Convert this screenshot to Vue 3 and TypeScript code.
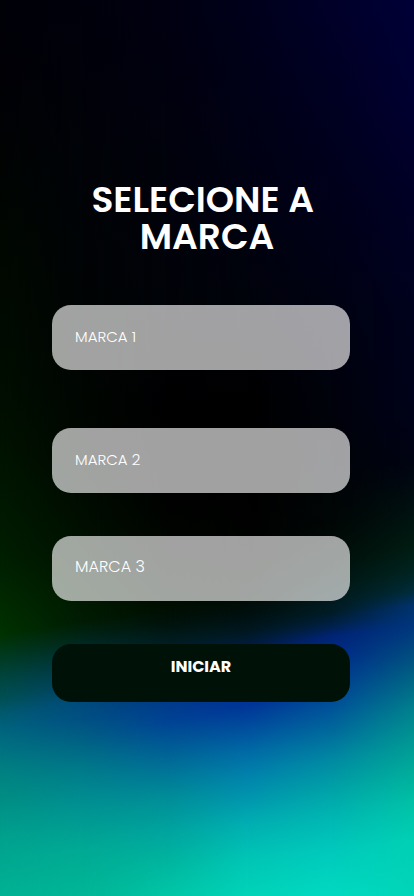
<script setup lang="ts">
import { reactive } from 'vue'

interface BrandField {
  id: string
  label: string
  size: 'small' | 'large'
  value: string
}

const brands = reactive<BrandField[]>([
  { id: 'marca-1', label: 'MARCA 1', size: 'small', value: '' },
  { id: 'marca-2', label: 'MARCA 2', size: 'small', value: '' },
  { id: 'marca-3', label: 'MARCA 3', size: 'large', value: '' },
])

// Each ramp is a vertical list of [height, green, blue] stops;
// the ramps are spread evenly from the left edge to the right one.
type Stop = [number, number, number]

const RAMP_HEIGHT = 896
const BLEED = 40
const SLANT = 60

const ramps: Stop[][] = [
  [
    [0, 0, 9], [140, 3, 4], [300, 10, 0], [400, 14, 0], [500, 24, 0], [560, 31, 0],
    [610, 44, 0], [636, 50, 2], [660, 60, 36], [680, 70, 64], [700, 80, 84], [715, 90, 110],
    [728, 98, 124], [745, 110, 128], [770, 128, 130], [800, 142, 132], [840, 162, 142],
    [896, 178, 148],
  ],
  [
    [0, 0, 12], [150, 3, 8], [300, 4, 4], [450, 7, 0], [550, 17, 0], [600, 25, 0],
    [622, 28, 3], [640, 38, 28], [660, 50, 60], [680, 62, 92], [702, 74, 124], [720, 80, 131],
    [740, 96, 132], [770, 122, 138], [800, 142, 145], [850, 170, 148], [896, 182, 150],
  ],
  [
    [0, 0, 18], [150, 2, 12], [300, 3, 8], [400, 0, 2], [500, 2, 0], [560, 7, 0],
    [605, 14, 0], [622, 18, 10], [640, 28, 30], [660, 36, 64], [680, 48, 104], [705, 60, 140],
    [722, 67, 148], [740, 85, 148], [770, 115, 151], [800, 143, 152], [830, 163, 158],
    [860, 180, 158], [896, 198, 166],
  ],
  [
    [0, 0, 28], [150, 1, 20], [300, 3, 11], [400, 0, 1], [480, 0, 0], [550, 3, 0],
    [595, 11, 4], [615, 16, 16], [632, 24, 34], [645, 28, 64], [665, 36, 118], [690, 45, 146],
    [706, 54, 152], [728, 78, 158], [750, 105, 165], [775, 130, 172], [800, 152, 175],
    [825, 176, 178], [860, 198, 182], [896, 212, 184],
  ],
  [
    [0, 0, 42], [150, 0, 30], [300, 2, 18], [430, 2, 10], [520, 6, 5], [560, 15, 10],
    [590, 24, 22], [612, 28, 38], [624, 32, 70], [636, 36, 118], [655, 42, 134],
    [675, 56, 144], [702, 78, 152], [730, 105, 156], [760, 138, 163], [790, 163, 168],
    [820, 184, 180], [850, 201, 188], [896, 218, 193],
  ],
  [
    [0, 0, 56], [100, 0, 49], [200, 0, 38], [300, 2, 30], [400, 2, 26], [460, 3, 18],
    [500, 15, 16], [545, 28, 18], [570, 36, 32], [590, 44, 58], [604, 50, 108],
    [625, 54, 124], [650, 74, 126], [680, 102, 132], [710, 130, 142], [735, 148, 146],
    [770, 172, 154], [800, 192, 166], [840, 208, 180], [896, 212, 184],
  ],
]

const last = ramps.length - 1

const bands = ramps.map((ramp, index) => {
  const shift = BLEED + SLANT * (index / last - 0.5)
  const stops = ramp.map(([y, green, blue]) => {
    const at = ((y + shift) / (RAMP_HEIGHT + 2 * BLEED)) * 100
    return `rgb(0, ${green}, ${blue}) ${at.toFixed(2)}%`
  })
  const from = ((index - 1) / last) * 100
  const to = (index / last) * 100
  return {
    backgroundImage: `linear-gradient(${stops.join(', ')})`,
    maskImage: index === 0 ? 'none' : `linear-gradient(90deg, transparent ${from}%, #000 ${to}%)`,
  }
})
</script>

<template>
  <main class="screen">
    <div class="aurora" aria-hidden="true">
      <div v-for="(band, index) in bands" :key="index" class="band" :style="band"></div>
    </div>

    <h1 class="title">SELECIONE A&nbsp;<br />MARCA</h1>

    <form class="form" @submit.prevent>
      <input
        v-for="brand in brands"
        :id="brand.id"
        :key="brand.id"
        v-model="brand.value"
        class="field"
        :class="brand.size"
        type="text"
        :placeholder="brand.label"
        :aria-label="brand.label"
      />
      <button class="start" type="submit">INICIAR</button>
    </form>
  </main>
</template>

<style>
body {
  margin: 0;
  background: #000;
}
</style>

<style scoped>
.screen {
  position: relative;
  isolation: isolate;
  box-sizing: border-box;
  min-height: 100vh;
  padding: 181px 0 40px;
  overflow: hidden;
  color: #fff;
  font-family: Poppins, Lato, sans-serif;
}

.aurora {
  position: absolute;
  inset: -40px 0;
  z-index: -1;
  transform: skewY(-8deg);
}

.band {
  position: absolute;
  inset: 0;
}

.title {
  margin: 0 0 50px;
  font-size: 36px;
  font-weight: 600;
  line-height: 37px;
  text-align: center;
}

.form {
  display: flex;
  flex-direction: column;
  gap: 43px;
  margin: 0 64px 0 52px;
}

.field,
.start {
  box-sizing: border-box;
  width: 100%;
  border: 0;
  border-radius: 19px;
  color: #fff;
  font-family: inherit;
}

.field {
  height: 65px;
  padding: 0 23px 2px;
  background: rgba(255, 255, 255, 0.63);
  font-weight: 300;
}

.field:first-child {
  margin-bottom: 15px;
}

.field::placeholder {
  color: #fff;
  opacity: 1;
}

.small {
  font-size: 15px;
}

.large {
  padding-bottom: 4px;
  font-size: 16px;
}

.start {
  height: 58px;
  padding: 0 0 14px;
  background: #001208;
  font-size: 16px;
  font-weight: 700;
  cursor: pointer;
}
</style>
